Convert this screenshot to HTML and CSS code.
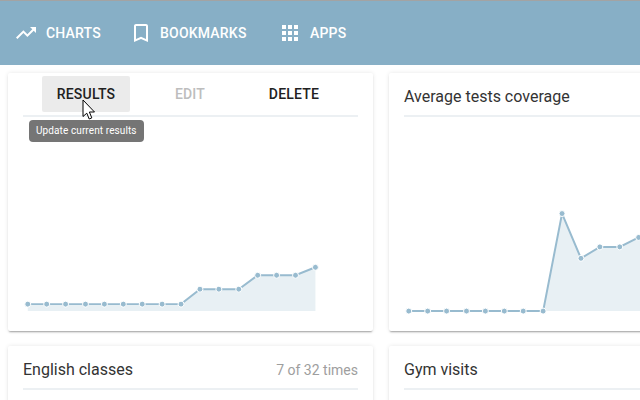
FILE: index.html
```html
<!doctype html>
<html lang="en">
  <head>
    <meta charset="UTF-8" />
    <meta name="viewport" content="width=device-width, initial-scale=1.0" />
    <title>Dashboard</title>
    <link rel="stylesheet" href="styles.css">
  </head>
  <body>
    <nav class="topbar">
      <a class="nav-item nav-charts">
        <svg class="nav-icon" viewBox="0 0 24 24"><path d="M16 6l2.29 2.29-4.88 4.88-4-4L2 16.59 3.41 18l6-6 4 4 6.3-6.29L22 12V6z"/></svg>
        CHARTS
      </a>
      <a class="nav-item nav-bookmarks">
        <svg class="nav-icon" viewBox="0 0 24 24"><path d="M17 3H7c-1.1 0-1.99.9-1.99 2L5 21l7-3 7 3V5c0-1.1-.9-2-2-2zm0 15l-5-2.18L7 18V5h10v13z"/></svg>
        BOOKMARKS
      </a>
      <a class="nav-item">
        <svg class="nav-icon" viewBox="0 0 24 24"><path d="M4 8h4V4H4v4zm6 12h4v-4h-4v4zm-6 0h4v-4H4v4zm0-6h4v-4H4v4zm6 0h4v-4h-4v4zm6-10v4h4V4h-4zm-6 4h4V4h-4v4zm6 6h4v-4h-4v4zm0 6h4v-4h-4v4z"/></svg>
        APPS
      </a>
    </nav>

    <main class="cards">
      <section class="card">
        <div class="card-actions">
          <button class="action action-active">RESULTS</button>
          <button class="action action-disabled">EDIT</button>
          <button class="action">DELETE</button>
        </div>
        <div class="tooltip">Update current results</div>
        <svg class="cursor" viewBox="-1 -1 15 22"><path d="M0 0V16.500L3.800 13.200L6.200 19L8.800 17.900L6.400 12H11.500z"/></svg>
        <svg class="chart" viewBox="0 0 365 215">
          <path class="chart-fill" d="M19 188H173L192 173H231L250 159H288L308 151V195H19z"/>
          <path class="chart-line" d="M19 188H173L192 173H231L250 159H288L308 151"/>
          <g class="chart-dots">
            <circle cx="19" cy="188" r="3"/><circle cx="38" cy="188" r="3"/><circle cx="57" cy="188" r="3"/>
            <circle cx="77" cy="188" r="3"/><circle cx="96" cy="188" r="3"/><circle cx="115" cy="188" r="3"/>
            <circle cx="134" cy="188" r="3"/><circle cx="154" cy="188" r="3"/><circle cx="173" cy="188" r="3"/>
            <circle cx="192" cy="173" r="3"/><circle cx="211" cy="173" r="3"/><circle cx="231" cy="173" r="3"/>
            <circle cx="250" cy="159" r="3"/><circle cx="269" cy="159" r="3"/><circle cx="288" cy="159" r="3"/>
            <circle cx="308" cy="151" r="3"/>
          </g>
        </svg>
      </section>

      <section class="card">
        <div class="card-header">
          <h2 class="card-title">Average tests coverage</h2>
        </div>
        <svg class="chart" viewBox="0 0 365 215">
          <path class="chart-fill" d="M19 195H154L173 97L192 142L211 130.500H231L250 121L269 112V195z"/>
          <path class="chart-line" d="M19 195H154L173 97L192 142L211 130.500H231L250 121L269 112"/>
          <g class="chart-dots">
            <circle cx="19" cy="195" r="3"/><circle cx="38" cy="195" r="3"/><circle cx="57" cy="195" r="3"/>
            <circle cx="77" cy="195" r="3"/><circle cx="96" cy="195" r="3"/><circle cx="115" cy="195" r="3"/>
            <circle cx="134" cy="195" r="3"/><circle cx="154" cy="195" r="3"/><circle cx="173" cy="97" r="3"/>
            <circle cx="192" cy="142" r="3"/><circle cx="211" cy="130.500" r="3"/><circle cx="231" cy="130.500" r="3"/>
            <circle cx="250" cy="121" r="3"/>
          </g>
        </svg>
      </section>

      <section class="card">
        <div class="card-header">
          <h2 class="card-title">English classes</h2>
          <span class="card-meta">7 of 32 times</span>
        </div>
      </section>

      <section class="card">
        <div class="card-header">
          <h2 class="card-title">Gym visits</h2>
        </div>
      </section>
    </main>
  </body>
</html>
```

FILE: styles.css
```css
:root {
  --primary: #87afc6;
  --chart-line: #98bbcf;
  --chart-fill: #e8f0f4;
  --divider: #ecf0f3;
  --text: #333333;
}

html,
body {
  height: 100%;
}

body {
  margin: 0;
  overflow: hidden;
  background-color: #ffffff;
  color: var(--text);
  font-family: Roboto, sans-serif;
}

.topbar {
  display: flex;
  align-items: center;
  height: 64px;
  padding-left: 14px;
  border-top: 1px solid #a3a3a3;
  background-color: var(--primary);
}

.nav-item {
  display: flex;
  align-items: center;
  gap: 8px;
  color: #ffffff;
  font-size: 14px;
  font-weight: 500;
  letter-spacing: 0.2px;
}

.nav-charts {
  width: 115px;
}

.nav-bookmarks {
  width: 149px;
  gap: 7px;
}

.nav-icon {
  width: 24px;
  height: 24px;
  fill: #ffffff;
}

.cards {
  display: grid;
  grid-template-columns: 365px 365px;
  grid-auto-rows: 258px;
  gap: 15px 16px;
  padding: 8px;
}

.card {
  position: relative;
  border-radius: 2px;
  background-color: #ffffff;
  box-shadow: 0 2px 2px -1px rgba(0, 0, 0, 0.35), 0 0 4px rgba(0, 0, 0, 0.1);
}

.card-header,
.card-actions {
  display: flex;
  margin: 0 15px;
  border-bottom: 2px solid var(--divider);
}

.card-header {
  align-items: center;
  justify-content: space-between;
  height: 37px;
  padding-top: 5px;
}

.card-actions {
  gap: 16px;
  height: 39px;
  padding: 3px 0 0 19px;
}

.card-title {
  margin: 0;
  font-size: 16px;
  font-weight: 400;
}

.card-meta {
  color: #9e9e9e;
  font-size: 14px;
}

.action {
  width: 88px;
  height: 36px;
  padding: 0;
  border: none;
  border-radius: 2px;
  background: none;
  color: #212121;
  font-family: inherit;
  font-size: 14px;
  font-weight: 500;
  letter-spacing: 0.2px;
}

.action-active {
  background-color: #ebebeb;
}

.action-disabled {
  color: #bdbdbd;
}

.tooltip {
  position: absolute;
  top: 47px;
  left: 21px;
  padding: 0 7px;
  border-radius: 4px;
  background-color: #757575;
  color: #ffffff;
  font-size: 10px;
  letter-spacing: 0.1px;
  line-height: 22px;
}

.cursor {
  position: absolute;
  top: 26px;
  left: 74px;
  width: 15px;
  height: 22px;
  fill: #ffffff;
  stroke: #000000;
  stroke-width: 1;
}

.chart {
  display: block;
  width: 365px;
  height: 214px;
}

.chart-fill {
  fill: var(--chart-fill);
}

.chart-line {
  fill: none;
  stroke: var(--chart-line);
  stroke-width: 2;
}

.chart-dots circle {
  fill: var(--chart-line);
  stroke: #ffffff;
  stroke-width: 1;
}
```
